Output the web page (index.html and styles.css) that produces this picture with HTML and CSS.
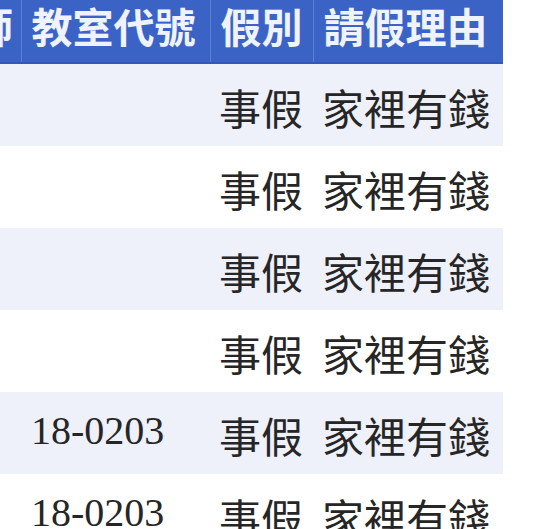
FILE: index.html
```html
<!DOCTYPE html>
<html lang="zh-Hant">
<head>
<meta charset="utf-8">
<link rel="stylesheet" href="styles.css">
</head>
<body>
<div class="viewport">
  <table class="leave">
    <colgroup>
      <col class="c1"><col class="c2"><col class="c3"><col class="c4">
    </colgroup>
    <thead>
      <tr><th>授課教師</th><th>教室代號</th><th>假別</th><th>請假理由</th></tr>
    </thead>
    <tbody>
      <tr class="alt"><td></td><td></td><td>事假</td><td>家裡有錢</td></tr>
      <tr><td></td><td></td><td>事假</td><td>家裡有錢</td></tr>
      <tr class="alt"><td></td><td></td><td>事假</td><td>家裡有錢</td></tr>
      <tr><td></td><td></td><td>事假</td><td>家裡有錢</td></tr>
      <tr class="alt"><td></td><td class="num">18-0203</td><td>事假</td><td>家裡有錢</td></tr>
      <tr><td></td><td class="num">18-0203</td><td>事假</td><td>家裡有錢</td></tr>
    </tbody>
  </table>
</div>
</body>
</html>
```
FILE: styles.css
```css
html, body {
  margin: 0;
  padding: 0;
  background: #ffffff;
}
.viewport {
  width: 550px;
  height: 529px;
  overflow: hidden;
}
.leave {
  border-collapse: collapse;
  table-layout: fixed;
  width: 664px;
  margin-left: -161px;
  font-family: "Noto Sans CJK TC", "Noto Sans", sans-serif;
}
.c1 { width: 182px; }
.c2 { width: 189px; }
.c3 { width: 103px; }
.c4 { width: 190px; }
.leave th {
  height: 57px;
  padding: 5px 0 0 10px;
  text-align: left;
  vertical-align: top;
  background: #3b63c6;
  color: #eef3ff;
  font-size: 41px;
  font-weight: 700;
  line-height: 1;
  white-space: nowrap;
  border-left: 1px solid #5a80d8;
  border-bottom: 2px solid #3458b8;
}
.leave th:first-child { border-left: none; }
.leave td {
  height: 78px;
  padding: 4px 0 0 9px;
  text-align: left;
  color: #262626;
  font-size: 42px;
  font-weight: 400;
  line-height: 1;
  white-space: nowrap;
  vertical-align: middle;
}
.leave tr.alt td { background: #eef0fa; }
.leave td.num {
  font-family: "Liberation Serif", "Noto Sans CJK TC", serif;
  font-size: 40px;
  padding: 0 0 4px 10px;
}
```
